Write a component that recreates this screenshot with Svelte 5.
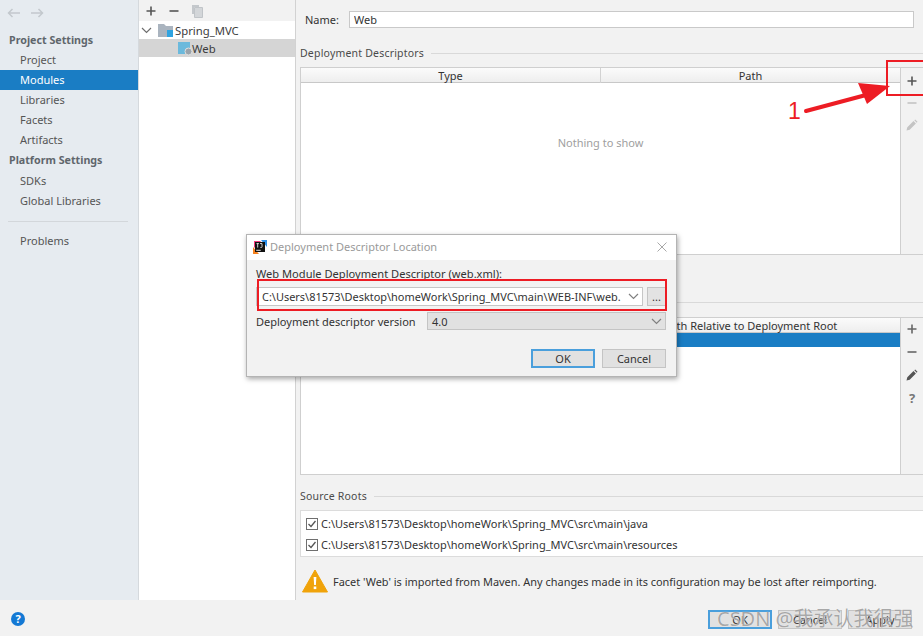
<script>
  const projectItems = ['Project', 'Modules', 'Libraries', 'Facets', 'Artifacts'];
  const platformItems = ['SDKs', 'Global Libraries'];
  const sourceRoots = [
    'C:\\Users\\81573\\Desktop\\homeWork\\Spring_MVC\\src\\main\\java',
    'C:\\Users\\81573\\Desktop\\homeWork\\Spring_MVC\\src\\main\\resources'
  ];
</script>

{#snippet plus(color)}
  <svg width="12" height="12" viewBox="0 0 12 12"><path d="M6 1.5v9M1.5 6h9" stroke={color} stroke-width="1.6" fill="none" /></svg>
{/snippet}
{#snippet minus(color)}
  <svg width="12" height="12" viewBox="0 0 12 12"><path d="M1.5 6h9" stroke={color} stroke-width="1.6" fill="none" /></svg>
{/snippet}
{#snippet pencil(color)}
  <svg width="12" height="12" viewBox="0 0 12 12"><path d="M0.5 11.5l0.8-3.2 6.2-6.2 2.4 2.4-6.2 6.2zM8.3 1.3l0.9-0.8 2.3 2.3-0.8 0.9z" fill={color} /></svg>
{/snippet}
{#snippet chevron(color = '#808080')}
  <svg width="11" height="7" viewBox="0 0 11 7"><path d="M1 1l4.5 4.5L10 1" stroke={color} stroke-width="1.2" fill="none" /></svg>
{/snippet}

<div class="window">
  <div class="main">
    <aside class="sidebar">
      <div class="history">
        <svg width="14" height="10" viewBox="0 0 14 10"><path d="M13 5H2M5.5 1L1.500 5l4 4" stroke="#c3c8cd" stroke-width="1.5" fill="none" /></svg>
        <svg width="14" height="10" viewBox="0 0 14 10"><path d="M1 5h11M8.5 1l4 4-4 4" stroke="#c3c8cd" stroke-width="1.5" fill="none" /></svg>
      </div>
      <div class="heading">Project Settings</div>
      {#each projectItems as item}
        <div class="nav" class:active={item === 'Modules'}>{item}</div>
      {/each}
      <div class="heading lower">Platform Settings</div>
      {#each platformItems as item}
        <div class="nav lower">{item}</div>
      {/each}
      <div class="rule"></div>
      <div class="nav">Problems</div>
    </aside>

    <section class="tree">
      <div class="tree-tools">
        {@render plus('#555')}
        {@render minus('#555')}
        <svg width="12" height="14" viewBox="0 0 12 14"><path d="M1 1h7v2H3v7H1z" fill="#c4c8cc" /><path d="M3.5 3.5h8v10h-8z" fill="#d3d6d9" stroke="#c0c4c8" /></svg>
      </div>
      <div class="tree-row">
        <span class="twist">{@render chevron('#6e6e6e')}</span>
        <svg class="node" width="16" height="14" viewBox="0 0 16 14"><path d="M0 1h6l2 2h7v11H0z" fill="#aab4bf" /><rect x="9" y="7" width="6" height="7" fill="#2fa3e0" /></svg>
        Spring_MVC
      </div>
      <div class="tree-row child">
        <svg class="node" width="16" height="15" viewBox="0 0 16 15"><rect x="0" y="1" width="12" height="12" fill="#6bb9dc" /><circle cx="10.500" cy="10.5" r="3.500" fill="#9aa3ab" stroke="#e0e0e0" /></svg>
        Web
      </div>
    </section>

    <section class="detail">
      <div class="name-row">
        <label for="name">Name:</label>
        <input id="name" value="Web" />
      </div>

      <div class="group-title"><span>Deployment Descriptors</span><i></i></div>
      <div class="table-box first">
        <div class="table">
          <div class="thead"><div>Type</div><div>Path</div></div>
          <div class="empty">Nothing to show</div>
        </div>
        <div class="side-tools">
          {@render plus('#555')}
          {@render minus('#c4c4c4')}
          {@render pencil('#c4c4c4')}
        </div>
      </div>

      <div class="group-title second"><span>Web Resource Directories</span><i></i></div>
      <div class="table-box resources">
        <div class="table">
          <div class="thead"><div>Web Resource Directory</div><div>Path Relative to Deployment Root</div></div>
          <div class="selected-row"></div>
        </div>
        <div class="side-tools">
          {@render plus('#666')}
          {@render minus('#666')}
          {@render pencil('#555')}
          <span class="question">?</span>
        </div>
      </div>

      <div class="group-title third"><span>Source Roots</span><i></i></div>
      <div class="roots">
        {#each sourceRoots as root}
          <div class="root">
            <svg width="12" height="12" viewBox="0 0 12 12"><rect x="0.5" y="0.5" width="11" height="11" fill="#fff" stroke="#6f6f6f" /><path d="M2.5 6l2.5 2.5 4.5-5.5" stroke="#555" stroke-width="1.3" fill="none" /></svg>
            {root}
          </div>
        {/each}
      </div>

      <div class="warning">
        <svg width="26" height="24" viewBox="0 0 26 24"><path d="M13 1L25.5 23H.5z" fill="#f0a30a" stroke="#f0a30a" stroke-linejoin="round" /><path d="M11.6 8h2.8l-.5 8h-1.8z" fill="#fff" /><rect x="11.7" y="17.5" width="2.6" height="2.6" fill="#fff" /></svg>
        <span>Facet 'Web' is imported from Maven. Any changes made in its configuration may be lost after reimporting.</span>
      </div>
    </section>
  </div>

  <footer class="footer">
    <span class="help">?</span>
    <div class="footer-buttons">
      <button class="btn default">OK</button>
      <button class="btn">Cancel</button>
      <button class="btn">Apply</button>
    </div>
  </footer>

  <div class="dialog">
    <div class="dialog-title">
      <svg width="14" height="14" viewBox="0 0 14 14">
        <path d="M1 1h7l-7 7z" fill="#f0397a" /><path d="M8 0h6v7z" fill="#2d8fe8" /><path d="M0 7l6 7H0z" fill="#f58220" />
        <rect x="2" y="2" width="10" height="10" fill="#111" />
        <rect x="3.2" y="9.8" width="4.5" height="0.9" fill="#fff" />
        <path d="M3.5 3.6h2.4M4.700 3.6v4M7 3.6h2v3.2c0 .8-1 .9-1.700.5" stroke="#fff" stroke-width="0.8" fill="none" />
      </svg>
      <span>Deployment Descriptor Location</span>
      <svg class="close" width="10" height="10" viewBox="0 0 10 10"><path d="M.5 .5l9 9M9.500 .5l-9 9" stroke="#a8a8a8" stroke-width="1" /></svg>
    </div>
    <div class="dialog-body">
      <div class="dialog-label">Web Module Deployment Descriptor (web.xml):</div>
      <div class="path-row">
        <div class="path-input">
          <span>C:\Users\81573\Desktop\homeWork\Spring_MVC\main\WEB-INF\web.</span>
          {@render chevron()}
        </div>
        <button class="dots">...</button>
      </div>
      <div class="version-row">
        <span class="version-label">Deployment descriptor version</span>
        <div class="version-select"><span>4.0</span>{@render chevron()}</div>
      </div>
      <div class="dialog-actions">
        <button class="btn default">OK</button>
        <button class="btn">Cancel</button>
      </div>
    </div>
  </div>

  <div class="mark mark-path"></div>
  <div class="mark mark-plus"></div>
  <svg class="arrow" width="100" height="50" viewBox="0 0 100 50">
    <path d="M10 36L70 20" stroke="#ed1c24" stroke-width="4" stroke-linecap="round" />
    <path d="M62 8L94 11 71 29z" fill="#ed1c24" />
  </svg>
  <span class="one">1</span>
  <div class="watermark">CSDN @我承认我很强</div>
</div>

<style>
  :global(body) {
    margin: 0;
    background: #f2f2f2;
  }

  .window {
    position: relative;
    width: 923px;
    height: 636px;
    overflow: hidden;
    display: flex;
    flex-direction: column;
    font-family: "Noto Sans", "Open Sans", sans-serif;
    font-size: 11px;
    color: #333;
    background: #f2f2f2;
  }

  .main {
    display: flex;
    height: 600px;
  }

  .sidebar {
    width: 139px;
    flex: none;
    box-sizing: border-box;
    background: #e6ebf0;
    border-right: 1px solid #d5d9dd;
    color: #555;
    padding-top: 8px;
  }

  .history {
    display: flex;
    gap: 9px;
    padding-left: 7px;
    height: 21.7px;
  }

  .heading {
    font-weight: 700;
    font-size: 10.7px;
    color: #5f666c;
    height: 20.1px;
    line-height: 20px;
    padding-left: 9px;
  }

  .heading.lower {
    line-height: 21px;
  }

  .nav {
    height: 20.1px;
    line-height: 20px;
    padding-left: 20px;
  }

  .nav.lower {
    line-height: 21px;
  }

  .nav.active {
    background: #1a7dc4;
    color: #fff;
  }

  .rule {
    height: 1px;
    background: #d3d7db;
    margin: 10px 10px 9px 8px;
  }

  .tree {
    width: 157px;
    flex: none;
    box-sizing: border-box;
    background: #fff;
    border-right: 1px solid #d2d2d2;
  }

  .tree-tools {
    height: 21px;
    box-sizing: border-box;
    background: #f2f2f2;
    display: flex;
    align-items: center;
    gap: 11px;
    padding-left: 6px;
  }

  .tree-row {
    height: 18px;
    display: flex;
    align-items: center;
    font-size: 11.3px;
    color: #3c3c3c;
  }

  .twist {
    width: 19px;
    padding-left: 2px;
    box-sizing: border-box;
    display: flex;
  }

  .node {
    margin-right: 1px;
  }

  .tree-row.child {
    background: #d5d5d5;
    padding-left: 39px;
  }

  .tree-row.child .node {
    margin-right: -2px;
  }

  .detail {
    flex: 1;
    min-width: 0;
    padding: 10px 0 0 4px;
  }

  .name-row {
    display: flex;
    align-items: center;
    gap: 10px;
    height: 19px;
    padding-left: 5px;
    padding-right: 9px;
  }

  .name-row input {
    flex: 1;
    height: 17px;
    padding: 0 4px;
    box-sizing: border-box;
    border: 1px solid #c9c9c9;
    font: inherit;
    color: #333;
    outline: none;
  }

  .group-title {
    display: flex;
    align-items: center;
    gap: 7px;
    height: 16px;
    margin-top: 16px;
    font-size: 10.5px;
    letter-spacing: .2px;
    color: #4a4a4a;
  }

  .group-title i {
    flex: 1;
    height: 1px;
    background: #d9d9d9;
  }

  .group-title.second {
    margin-top: 39px;
  }

  .group-title.third {
    margin-top: 13px;
  }

  .table-box {
    display: flex;
    margin-top: 6px;
    border: 1px solid #cfcfcf;
    border-right: none;
    background: #fff;
  }

  .table-box.first {
    height: 186px;
  }

  .table-box.resources {
    height: 156px;
    margin-top: 7px;
  }

  .table {
    flex: 1;
    min-width: 0;
  }

  .thead {
    display: grid;
    grid-template-columns: 299px 1fr;
    height: 14px;
    line-height: 15px;
    text-align: center;
    color: #333;
    background: linear-gradient(#fbfbfb, #eeeeee);
    border-bottom: 1px solid #c8c8c8;
  }

  .thead div + div {
    border-left: 1px solid #d2d2d2;
  }

  .empty {
    text-align: center;
    color: #a0a0a0;
    margin-top: 52px;
  }

  .selected-row {
    height: 14px;
    background: #1a7dc4;
  }

  .side-tools {
    width: 22px;
    flex: none;
    background: #f2f2f2;
    border-left: 1px solid #cfcfcf;
    display: flex;
    flex-direction: column;
    align-items: center;
    gap: 10px;
    padding-top: 7px;
  }

  .resources .side-tools {
    gap: 11px;
    padding-top: 5px;
  }

  .question {
    font-size: 13px;
    font-weight: 700;
    line-height: 12px;
    color: #777;
  }

  .roots {
    margin-top: 6px;
    height: 47px;
    box-sizing: border-box;
    padding-top: 2px;
    background: #fff;
    border: 1px solid #dcdcdc;
    border-right: none;
  }

  .root {
    height: 21px;
    display: flex;
    align-items: center;
    gap: 3px;
    padding-left: 5px;
    color: #333;
  }

  .warning {
    display: flex;
    align-items: center;
    gap: 5px;
    height: 24px;
    margin-top: 12px;
    padding-left: 2px;
    font-size: 10.95px;
    white-space: nowrap;
    color: #333;
  }

  .footer {
    height: 36px;
    flex: none;
    display: flex;
    align-items: center;
    justify-content: space-between;
    padding: 2px 11px 0 11px;
    box-sizing: border-box;
  }

  .help {
    width: 14px;
    height: 14px;
    border-radius: 50%;
    background: #1479d4;
    color: #fff;
    font-size: 11px;
    font-weight: 700;
    line-height: 14px;
    text-align: center;
  }

  .footer-buttons {
    display: flex;
    gap: 6px;
  }

  .btn {
    width: 64px;
    height: 19px;
    padding: 0;
    font: inherit;
    color: #333;
    background: #e1e1e1;
    border: 1px solid #c4c4c4;
  }

  .btn.default {
    border: 2px solid #4a9fdc;
  }

  .dialog {
    position: absolute;
    left: 246px;
    top: 234px;
    width: 431px;
    height: 143px;
    box-sizing: border-box;
    background: #f2f2f2;
    border: 1px solid #b4b4b4;
    box-shadow: 1px 2px 5px rgba(0, 0, 0, .35);
  }

  .dialog-title {
    display: flex;
    align-items: center;
    gap: 3px;
    height: 25px;
    box-sizing: border-box;
    padding: 0 0 2px 6px;
    background: #fff;
    color: #9a9a9a;
  }

  .close {
    margin-left: auto;
    margin-right: 9px;
  }

  .dialog-body {
    padding: 7px 10px 0 9px;
  }

  .dialog-label {
    height: 14px;
    line-height: 14px;
    font-size: 11.1px;
  }

  .path-row {
    display: flex;
    gap: 4px;
    margin-top: 6px;
    height: 19px;
  }

  .path-input {
    flex: 1;
    display: flex;
    align-items: center;
    justify-content: space-between;
    padding: 0 3px 0 5px;
    background: #fff;
    border: 1px solid #c6c6c6;
    font-size: 10.95px;
    white-space: nowrap;
    min-width: 0;
  }

  .dots {
    width: 19px;
    padding: 0;
    font: inherit;
    line-height: 12px;
    background: #e3e3e3;
    border: 1px solid #c4c4c4;
    color: #333;
  }

  .version-row {
    display: flex;
    align-items: center;
    margin-top: 5px;
    height: 20px;
  }

  .version-label {
    width: 171px;
    flex: none;
  }

  .version-select {
    flex: 1;
    height: 18px;
    box-sizing: border-box;
    display: flex;
    align-items: center;
    justify-content: space-between;
    padding: 0 3px 0 4px;
    background: #e1e1e1;
    border: 1px solid #c4c4c4;
  }

  .dialog-actions {
    display: flex;
    justify-content: flex-end;
    gap: 7px;
    margin-top: 18px;
  }

  .mark {
    position: absolute;
    box-sizing: border-box;
    border: 2px solid #ed1c24;
  }

  .mark-path {
    left: 257px;
    top: 279px;
    width: 410px;
    height: 32px;
  }

  .mark-plus {
    left: 886px;
    top: 60px;
    width: 50px;
    height: 36px;
  }

  .arrow {
    position: absolute;
    left: 796px;
    top: 75px;
  }

  .one {
    position: absolute;
    left: 788px;
    top: 97px;
    font-family: "Liberation Sans", sans-serif;
    font-size: 23px;
    line-height: 28px;
    color: #ed1c24;
  }

  .watermark {
    position: absolute;
    left: 717px;
    top: 606px;
    font-family: "Noto Sans", "Noto Sans CJK SC", sans-serif;
    font-size: 20px;
    line-height: 26px;
    white-space: nowrap;
    color: rgba(130, 130, 130, .7);
    text-shadow: 0 0 1px #fff;
  }
</style>
